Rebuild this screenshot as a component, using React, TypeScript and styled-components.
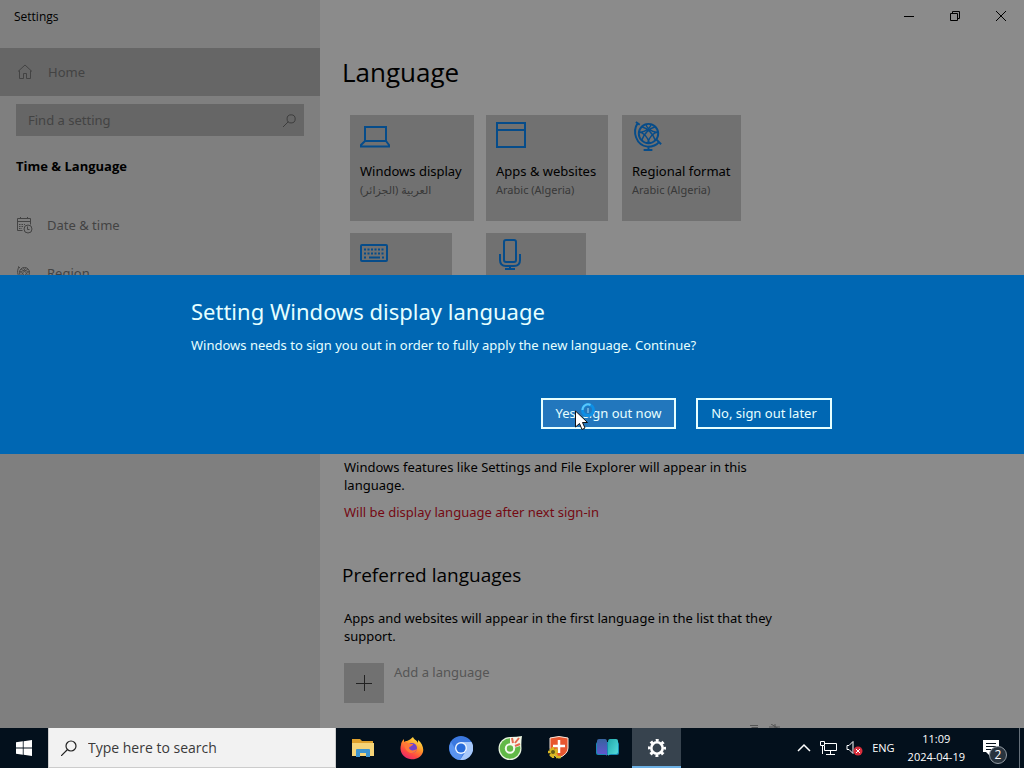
import React from "react";
import styled, { createGlobalStyle } from "styled-components";

const GlobalStyle = createGlobalStyle`
  * { box-sizing: border-box; }
  body {
    margin: 0;
    font-family: "Noto Sans", "Open Sans", "DejaVu Sans", sans-serif;
    font-size: 13px;
    line-height: 18px;
    color: #000;
  }
  button, input { font: inherit; color: inherit; border: 0; margin: 0; padding: 0; background: none; border-radius: 0; }
  button { text-align: left; }
  h1, h2, p { margin: 0; font-weight: 400; }
  svg { display: block; flex: none; }
`;

const Desktop = styled.div`
  display: flex;
  flex-direction: column;
  height: 100vh;
  background: #03101c;
`;

const SettingsWindow = styled.div`
  position: relative;
  flex: 1;
  min-height: 0;
  display: flex;
  overflow: hidden;
  background: #8b8b8b;
`;

const Sidebar = styled.nav`
  flex: 0 0 320px;
  background: #7f7f7f;
  color: #434343;
`;

const WindowTitle = styled.div`
  height: 48px;
  padding: 8px 14px;
  font-size: 12px;
  font-family: "Open Sans", sans-serif;
  color: #000;
`;

const NavItem = styled.a<{ $active?: boolean }>`
  display: flex;
  align-items: center;
  gap: 14px;
  height: 48px;
  padding: 0 16px;
  color: inherit;
  text-decoration: none;
  background: ${(p) => (p.$active ? "#666" : "transparent")};
`;

const SearchField = styled.label`
  display: flex;
  align-items: center;
  height: 32px;
  margin: 8px 16px 0;
  padding: 0 8px 0 12px;
  background: #666;
  color: #3c3c3c;
`;

const SearchInput = styled.input`
  flex: 1;
  min-width: 0;
  outline: 0;
  &::placeholder { color: #434343; opacity: 1; }
`;

const Category = styled.h2`
  padding: 21px 16px 26px;
  font-family: "Open Sans", sans-serif;
  font-size: 13px;
  font-weight: 700;
  color: #000;
`;

const Main = styled.main`
  flex: 1;
  min-width: 0;
  padding: 0 22px 0 24px;
`;

const Caption = styled.div`
  display: flex;
  justify-content: flex-end;
  height: 32px;
  margin-right: -22px;
`;

const CaptionButton = styled.button`
  display: grid;
  place-items: center;
  width: 46px;
`;

const PageTitle = styled.h1`
  margin: 19px 0 22px -2px;
  font-family: "Open Sans", sans-serif;
  font-size: 26px;
  line-height: 42px;
`;

const Tiles = styled.div`
  display: grid;
  grid-template-columns: repeat(3, 136px);
  row-gap: 12px;
  padding-left: 6px;
`;

const Tile = styled.button<{ $width: number }>`
  display: flex;
  flex-direction: column;
  align-items: flex-start;
  width: ${(p) => p.$width}px;
  height: 106px;
  padding: 4px 0 0 10px;
  background: #717171;
  white-space: nowrap;
`;

const TileIcon = styled.span`
  height: 43px;
  color: #064c8a;
`;

const TileSub = styled.span`
  font-size: 11px;
  line-height: 20px;
  color: #383838;
`;

const Section = styled.section`
  max-width: 440px;
`;

const DisplaySection = styled(Section)`
  margin-top: 119px;
`;

const Notice = styled.p`
  margin-top: 9px;
  color: #740912;
`;

const SectionTitle = styled.h2`
  margin: 40px 0 20px -2px;
  font-family: "Open Sans", sans-serif;
  font-size: 19px;
  line-height: 28px;
`;

const AddLanguage = styled.button`
  display: flex;
  gap: 10px;
  margin-top: 18px;
  color: #555;
`;

const AddBox = styled.span`
  display: grid;
  place-items: center;
  width: 40px;
  height: 40px;
  background: #717171;
  color: #222;
`;

const LowerTools = styled.div`
  display: flex;
  gap: 10px;
  margin: 21px 0 0 406px;
  color: #555;
`;

const Overlay = styled.div`
  position: absolute;
  inset: 0;
  display: flex;
  align-items: center;
`;

const Dialog = styled.div`
  width: 100%;
  padding: 21px 24px 25px;
  background: #0067b3;
  color: #e6ffff;
`;

const DialogBody = styled.div`
  max-width: 642px;
  margin: 0 auto;
`;

const DialogTitle = styled.h2`
  margin-bottom: 10px;
  font-size: 22px;
  line-height: 30px;
`;

const DialogActions = styled.div`
  display: flex;
  justify-content: flex-end;
  gap: 20px;
  margin-top: 44px;
  padding-right: 1px;
`;

const DialogButton = styled.button<{ $hover?: boolean }>`
  position: relative;
  width: ${(p) => (p.$hover ? 135 : 136)}px;
  height: 31px;
  border: 2px solid #e6ffff;
  background: ${(p) => (p.$hover ? "#2277bd" : "transparent")};
  text-align: center;
  white-space: nowrap;
`;

const Pointer = styled.svg`
  position: absolute;
  left: 31px;
  top: 2px;
`;

const Taskbar = styled.footer`
  display: flex;
  height: 40px;
  color: #fff;
  font-family: "Open Sans", sans-serif;
`;

const StartButton = styled.button`
  display: grid;
  place-items: center;
  width: 48px;
`;

const TaskSearch = styled.label`
  display: flex;
  align-items: center;
  gap: 11px;
  flex: 0 1 288px;
  padding: 0 12px;
  background: #f2f2f2;
  border: 1px solid #ccc;
  border-top: 0;
  color: #222;
  font-size: 14px;
`;

const TaskSearchInput = styled(SearchInput)`
  &::placeholder { color: #3a3a3a; }
`;

const Apps = styled.div`
  display: flex;
  margin-left: 2px;
`;

const AppButton = styled.button<{ $active?: boolean }>`
  display: grid;
  place-items: center;
  width: 49px;
  background: ${(p) => (p.$active ? "#37434e" : "transparent")};
  border-bottom: 2px solid ${(p) => (p.$active ? "#6cb0e4" : "transparent")};
  padding-top: 2px;
`;

const Tray = styled.div`
  display: flex;
  align-items: center;
  gap: 9px;
  margin-left: auto;
  padding-right: 4px;
  font-size: 11px;
`;

const TrayButton = styled.button`
  display: block;
`;

const Clock = styled.time`
  margin-left: 4px;
  text-align: center;
  white-space: nowrap;
`;

const ActionCenter = styled.button`
  position: relative;
  display: flex;
  align-items: flex-start;
  margin-left: 7px;
  width: 39px;
  height: 40px;
  padding: 12px 0 0 2px;
  border-right: 1px solid #66707a;
`;

const Badge = styled.span`
  position: absolute;
  left: 8px;
  top: 18px;
  width: 18px;
  height: 18px;
  border: 1px solid #929aa2;
  border-radius: 50%;
  background: #29343e;
  font-size: 12px;
  line-height: 16px;
  text-align: center;
`;

const HomeIcon = () => (
  <svg width="18" height="18" viewBox="0 0 18 18" fill="none" stroke="currentColor">
    <path d="M2 8.500 9 2l7 6.500M3.500 7.500v8h4v-5h3v5h4v-8" />
  </svg>
);

const SearchIcon = ({ size }: { size: number }) => (
  <svg width={size} height={size} viewBox="0 0 16 16" fill="none" stroke="currentColor" strokeWidth="1.200">
    <circle cx="10" cy="6" r="5" />
    <path d="M6.500 9.500 0 16" />
  </svg>
);

const CalendarIcon = () => (
  <svg width="17" height="17" viewBox="0 0 17 17" fill="none" stroke="currentColor">
    <path d="M6.500 13.500h-5v-12h13v6M1.500 4.500h13M4.500 0v2M11.500 0v2" />
    <path d="M3 7.500h6M3 9.500h4M3 11.500h3" strokeDasharray="1.500 1" />
    <circle cx="12" cy="12" r="4" />
    <path d="M11.500 9.500v3h2" />
  </svg>
);

const GlobeIcon = ({ size }: { size: number }) => (
  <svg width={size} height={size} viewBox="0 0 32 34" fill="none" stroke="currentColor" strokeWidth="2">
    <circle cx="16" cy="15" r="10" />
    <path d="M9 8q10 3 14 14M23 8q-10 3-14 14M6 13q8 2 11 12M26 13q-8 2-11 12M13 5q2 7 12 9M19 5q-2 7-12 9" strokeWidth="1.500" />
    <path d="M5 4C-1 13 3 27 15 28.500q8 0 12-5M3 3l4 3M24 21l5 5M16 28v4M11 32h9" />
  </svg>
);

const LaptopIcon = () => (
  <svg width="30" height="34" viewBox="0 0 30 34" fill="none" stroke="currentColor" strokeWidth="2">
    <path d="M5 22V8h21v14M5 22h21l3 4v1.500H1V26z" />
  </svg>
);

const BrowserIcon = () => (
  <svg width="30" height="34" viewBox="0 0 30 34" fill="none" stroke="currentColor" strokeWidth="2">
    <path d="M1 4h28v24H1zM1 11h28" />
  </svg>
);

const KeyboardIcon = () => (
  <svg width="29" height="34" viewBox="0 0 29 34" fill="none" stroke="currentColor" strokeWidth="2">
    <rect x="1" y="8" width="26" height="16" rx="1" />
    <path d="M4 12.500h20M4 16.500h20M4 20.500h3M22 20.500h3" strokeDasharray="2 1.500" />
    <path d="M9 20.500h11" />
  </svg>
);

const MicIcon = () => (
  <svg width="28" height="34" viewBox="0 0 28 34" fill="none" stroke="currentColor" strokeWidth="2">
    <rect x="8" y="3" width="12" height="22" rx="2" />
    <path d="M4 17v6q0 6 6 6h8q6 0 6-6v-6M14 29v2M9 32h10" />
  </svg>
);

const App = () => (
  <Desktop>
    <GlobalStyle />
    <SettingsWindow>
      <Sidebar aria-label="Settings">
        <WindowTitle>Settings</WindowTitle>
        <NavItem href="#home" $active><HomeIcon />Home</NavItem>
        <SearchField>
          <SearchInput type="text" placeholder="Find a setting" aria-label="Find a setting" />
          <SearchIcon size={13} />
        </SearchField>
        <Category>Time &amp; Language</Category>
        <NavItem href="#date"><CalendarIcon />Date &amp; time</NavItem>
        <NavItem href="#region"><GlobeIcon size={17} />Region</NavItem>
      </Sidebar>
      <Main>
        <Caption>
          <CaptionButton aria-label="Minimize">
            <svg width="10" height="10" stroke="#000"><path d="M0 5.500h10" /></svg>
          </CaptionButton>
          <CaptionButton aria-label="Restore">
            <svg width="10" height="10" fill="none" stroke="#000"><path d="M.5 2.500h7v7h-7zM2.500 2.500v-2h7v7h-2" /></svg>
          </CaptionButton>
          <CaptionButton aria-label="Close">
            <svg width="10" height="10" stroke="#000"><path d="M0 0l10 10M10 0L0 10" /></svg>
          </CaptionButton>
        </Caption>
        <PageTitle>Language</PageTitle>
        <Tiles>
          <Tile $width={124}>
            <TileIcon><LaptopIcon /></TileIcon>
            <span>Windows display</span>
            <TileSub dir="rtl" lang="ar">العربية (الجزائر)</TileSub>
          </Tile>
          <Tile $width={122}>
            <TileIcon><BrowserIcon /></TileIcon>
            <span>Apps &amp; websites</span>
            <TileSub>Arabic (Algeria)</TileSub>
          </Tile>
          <Tile $width={119}>
            <TileIcon><GlobeIcon size={33} /></TileIcon>
            <span>Regional format</span>
            <TileSub>Arabic (Algeria)</TileSub>
          </Tile>
          <Tile $width={102} aria-label="Keyboard"><TileIcon><KeyboardIcon /></TileIcon></Tile>
          <Tile $width={100} aria-label="Speech"><TileIcon><MicIcon /></TileIcon></Tile>
        </Tiles>
        <DisplaySection>
          <p>Windows features like Settings and File Explorer will appear in this language.</p>
          <Notice>Will be display language after next sign-in</Notice>
        </DisplaySection>
        <Section>
          <SectionTitle>Preferred languages</SectionTitle>
          <p>Apps and websites will appear in the first language in the list that they support.</p>
          <AddLanguage>
            <AddBox>
              <svg width="16" height="16" stroke="currentColor"><path d="M0 8.500h16M8.500 0v16" /></svg>
            </AddBox>
            <span>Add a language</span>
          </AddLanguage>
        </Section>
        <LowerTools aria-hidden="true">
          <svg width="9" height="12" fill="none" stroke="currentColor"><path d="M0 1.500h8M2 3.500h6M2 3v8" /></svg>
          <svg width="12" height="12" fill="none" stroke="currentColor"><path d="M0 3h11M6 0v5M2 0l8 5" /></svg>
        </LowerTools>
      </Main>
      <Overlay>
        <Dialog role="dialog" aria-labelledby="dialog-title">
          <DialogBody>
            <DialogTitle id="dialog-title">Setting Windows display language</DialogTitle>
            <p>Windows needs to sign you out in order to fully apply the new language. Continue?</p>
            <DialogActions>
              <DialogButton $hover>
                Yes, sign out now
                <Pointer width="26" height="30" viewBox="0 0 26 30" aria-hidden="true">
                  <circle cx="14" cy="8" r="5.500" fill="#2277bd" stroke="#0c8fe6" strokeWidth="3" />
                  <path d="M8.500 8a5.500 5.500 0 0 1 8-5" fill="none" stroke="#5cc8fa" strokeWidth="2" />
                  <path d="M14 6v5" stroke="#a5d8f5" strokeWidth="1" />
                  <path d="M1.500 9v16l4-3.500 2.500 6 3-1.500-2.500-5.500h5z" fill="#fff" stroke="#111" />
                </Pointer>
              </DialogButton>
              <DialogButton>No, sign out later</DialogButton>
            </DialogActions>
          </DialogBody>
        </Dialog>
      </Overlay>
    </SettingsWindow>
    <Taskbar>
      <StartButton aria-label="Start">
        <svg width="16" height="16" fill="#fff"><path d="M0 2.300 6.800 1.300v6.300H0zM7.600 1.200 16 0v7.600H7.600zM0 8.400h6.800v6.300L0 13.700zM7.600 8.400H16V16l-8.400-1.200z" /></svg>
      </StartButton>
      <TaskSearch>
        <SearchIcon size={16} />
        <TaskSearchInput type="text" placeholder="Type here to search" aria-label="Type here to search" />
      </TaskSearch>
      <Apps>
        <AppButton aria-label="File Explorer">
          <svg width="22" height="18" viewBox="0 0 22 18">
            <path d="M0 0h8l2 2h11v3H0z" fill="#dfa12d" />
            <path d="M0 4h22v13H0z" fill="#f6d478" />
            <path d="M4 18v-7q0-1 1-1h12q1 0 1 1v7h-4v-4H8v4z" fill="#3e94cf" />
          </svg>
        </AppButton>
        <AppButton aria-label="Firefox">
          <svg width="24" height="24" viewBox="0 0 24 24">
            <defs>
              <linearGradient id="fox" x1=".8" y1="0" x2=".2" y2="1">
                <stop offset="0" stopColor="#fff04a" /><stop offset=".4" stopColor="#ff9829" /><stop offset=".7" stopColor="#ff4b40" /><stop offset="1" stopColor="#e52273" />
              </linearGradient>
            </defs>
            <path d="M13 1c1 3 4 3 5 6V4c4 3 6 8 5 12-2 6-8 8-13 7C3 22-1 15 1 9c0-2 1-4 3-6v3c1-1 2-1 3-1 2-1 4-2 6-4z" fill="url(#fox)" />
            <circle cx="12" cy="12" r="5" fill="#7343c9" />
            <path d="M4 6c3 0 4 1 5 2h4c0 2-3 2-4 4 1 3 5 3 8 1-2 5-7 5-10 2-2-2-3-5-3-9z" fill="#ff7938" />
          </svg>
        </AppButton>
        <AppButton aria-label="Chromium">
          <svg width="24" height="24" viewBox="0 0 24 24">
            <circle cx="12" cy="12" r="12" fill="#3b78df" />
            <path d="M2 6a12 12 0 0 0 9 18l4-9-8-1z" fill="#5a94f0" />
            <path d="M12 6h10.500A12 12 0 0 1 11 24l6-9z" fill="#a7c8fa" />
            <circle cx="12" cy="12" r="6" fill="#edf5ff" /><circle cx="12" cy="12" r="4.600" fill="#286cdb" />
          </svg>
        </AppButton>
        <AppButton aria-label="Cốc Cốc">
          <svg width="24" height="24" viewBox="0 0 24 24">
            <path d="M12 1q7 0 12-1-1 6-.5 12.500A11.500 11.500 0 1 1 12 1z" fill="#e9f5df" />
            <circle cx="12" cy="12.500" r="10.300" fill="#62b947" />
            <path d="M12 9 12 1l11 0-1 9-6 2z" fill="#f4f6e9" />
            <circle cx="12" cy="12.500" r="4.200" fill="#62b947" stroke="#f4faee" strokeWidth="2" />
            <path d="M14 2l1 5M21 2l-4 5M22 8l-5 2" stroke="#e5694f" strokeWidth="2" />
          </svg>
        </AppButton>
        <AppButton aria-label="Security">
          <svg width="21" height="24" viewBox="0 0 21 24">
            <path d="M2 2q9-3 18 0v10q0 6-9 10-9-4-9-10z" fill="#e85730" stroke="#f8e7dc" />
            <path d="M11 4v13M5 10h12" stroke="#fff" strokeWidth="2.500" />
            <path d="M5 11v11M0 16h10M2 13l7 7M9 13l-7 7M8 21h5" stroke="#d9b823" strokeWidth="2.500" />
            <circle cx="5" cy="16" r="2" fill="#665d18" />
          </svg>
        </AppButton>
        <AppButton aria-label="Reader">
          <svg width="23" height="18" viewBox="0 0 23 18">
            <defs>
              <linearGradient id="page" x2="0" y2="1"><stop stopColor="#36649f" /><stop offset="1" stopColor="#6655d3" /></linearGradient>
              <linearGradient id="page2" y2="1"><stop stopColor="#23a9aa" /><stop offset="1" stopColor="#55dfe0" /></linearGradient>
            </defs>
            <rect x="0" y="3" width="23" height="13" rx="2" fill="#1789b3" />
            <path d="M3 0h6q2 0 2 3v14q-1-2-3-2H3q-2 0-2-2V2q0-2 2-2z" fill="url(#page)" />
            <path d="M14 0h6q2 0 2 2v11q0 2-2 2h-5q-2 0-3 2V3q0-3 2-3z" fill="url(#page2)" />
          </svg>
        </AppButton>
        <AppButton aria-label="Settings" $active>
          <svg width="20" height="20" viewBox="0 0 20 20" fill="none" stroke="#fff">
            <circle cx="10" cy="10" r="5.700" strokeWidth="2.600" />
            <circle cx="10" cy="10" r="7.800" strokeWidth="2.400" strokeDasharray="3 3.126" strokeDashoffset="1.500" />
          </svg>
        </AppButton>
      </Apps>
      <Tray>
        <TrayButton aria-label="Show hidden icons">
          <svg width="14" height="10" fill="none" stroke="#fff" strokeWidth="1.500"><path d="M1 8l6-6 6 6" /></svg>
        </TrayButton>
        <TrayButton aria-label="Network">
          <svg width="17" height="14" fill="none" stroke="#fff"><path d="M5 2.500h11.500v7H4.500V5M.5.500h4v4h-4zM2.500 5v8M10.500 10v3M6 13.500h9" /></svg>
        </TrayButton>
        <TrayButton aria-label="Muted">
          <svg width="17" height="16" fill="none" stroke="#fff">
            <path d="M1 5.500h2l4-4v12l-4-4H1z" /><circle cx="12" cy="11" r="4.500" fill="#d92e3c" stroke="none" /><path d="M10 9l4 4M14 9l-4 4" />
          </svg>
        </TrayButton>
        <TrayButton>ENG</TrayButton>
        <Clock dateTime="2024-04-19T11:09">11:09<br />2024-04-19</Clock>
        <ActionCenter aria-label="Notifications">
          <svg width="16" height="16" viewBox="0 0 16 16"><path d="M0 0h16v12H7v4l-4-4H0z" fill="#fff" /><path d="M3 3.500h10M3 6.500h10M3 9.500h6" stroke="#07131d" /></svg>
          <Badge>2</Badge>
        </ActionCenter>
      </Tray>
    </Taskbar>
  </Desktop>
);

export default App;
